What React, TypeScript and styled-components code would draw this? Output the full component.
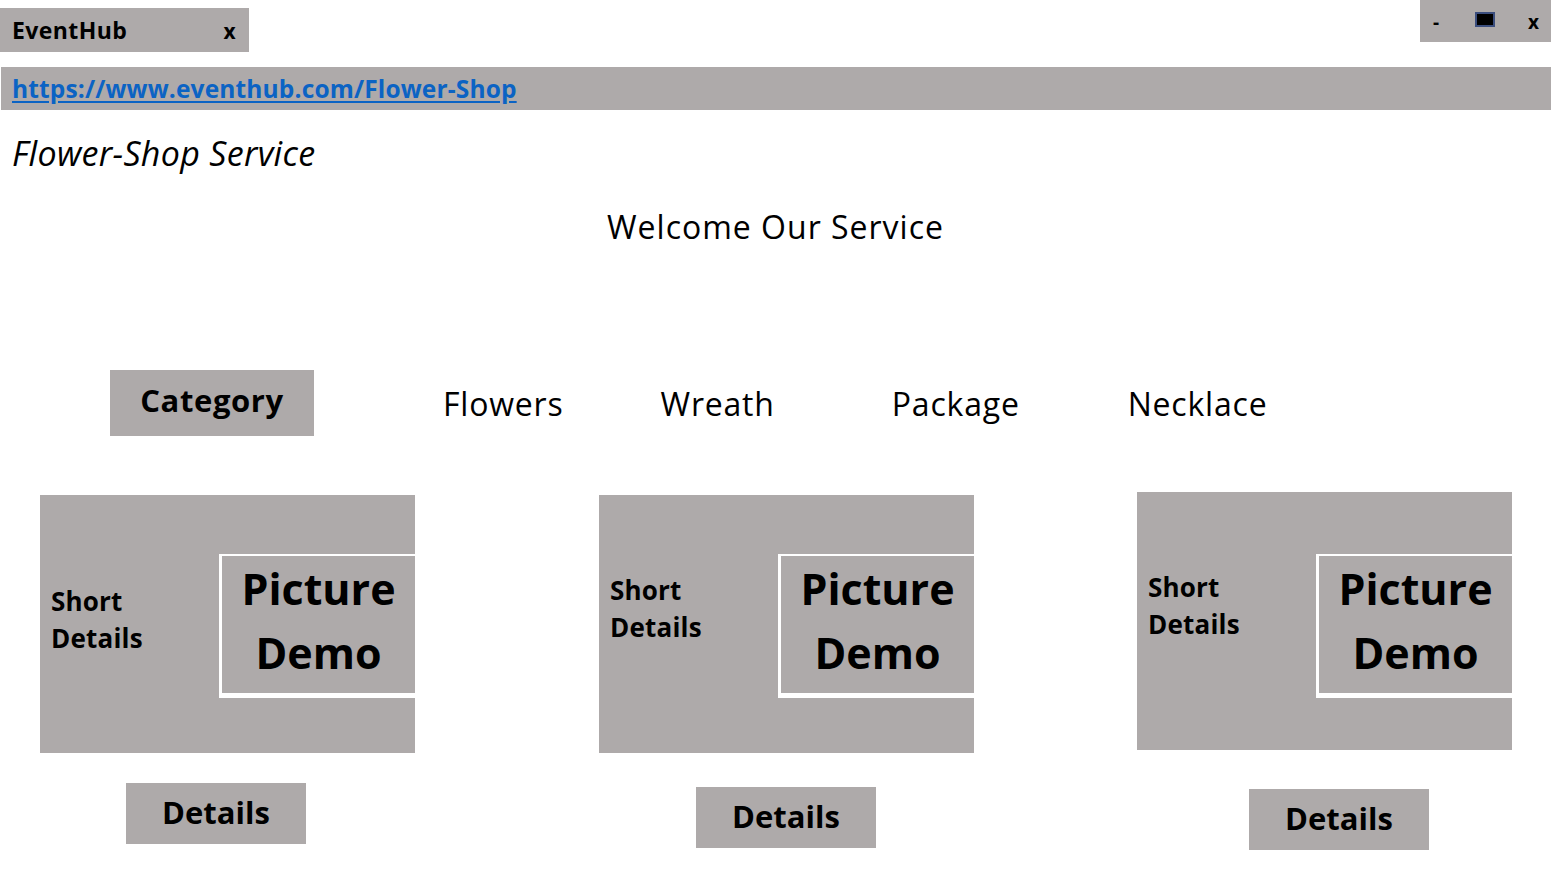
import styled, { createGlobalStyle } from "styled-components";

const GlobalStyle = createGlobalStyle`
  html, body {
    margin: 0;
    padding: 0;
    background: #ffffff;
    font-family: "Open Sans", Lato, sans-serif;
    color: #000;
  }
`;

const GRAY = "#aeaaaa";

interface CardData {
  left: number;
  shift: number;
  boxTop: number;
  btnLeft: number;
  btnTop: number;
  detailsTop: number;
}

const cards: CardData[] = [
  { left: 40, shift: 0, boxTop: 59, btnLeft: 86, btnTop: 30, detailsTop: -8 },
  { left: 184, shift: 0, boxTop: 59, btnLeft: 97, btnTop: 34, detailsTop: -30 },
  { left: 163, shift: -3, boxTop: 62, btnLeft: 112, btnTop: 39, detailsTop: -30 },
];

const navItems = [
  { label: "Flowers", gap: 0 },
  { label: "Wreath", gap: 97 },
  { label: "Package", gap: 117 },
  { label: "Necklace", gap: 108 },
];

const App = () => {
  return (
    <Page>
      <GlobalStyle />
      <TopBar>
        <Tab>
          <span>EventHub</span>
          <TabClose>x</TabClose>
        </Tab>
        <Controls>
          <span>-</span>
          <MaxBox />
          <span>x</span>
        </Controls>
      </TopBar>
      <UrlBar>
        <UrlLink href="#">https://www.eventhub.com/Flower-Shop</UrlLink>
      </UrlBar>
      <Title>Flower-Shop Service</Title>
      <Welcome>Welcome Our Service</Welcome>
      <CategoryRow>
        <CategoryButton>Category</CategoryButton>
        <NavList>
          {navItems.map((n) => (
            <NavItem key={n.label} $gap={n.gap}>
              {n.label}
            </NavItem>
          ))}
        </NavList>
      </CategoryRow>
      <CardsRow>
        {cards.map((c, i) => (
          <CardColumn key={i} $left={c.left} $shift={c.shift}>
            <Card>
              <ShortDetails $top={c.detailsTop}>
                Short
                <br />
                Details
              </ShortDetails>
              <PictureBox $top={c.boxTop}>
                Picture
                <br />
                Demo
              </PictureBox>
            </Card>
            <DetailsButton $left={c.btnLeft} $top={c.btnTop}>
              Details
            </DetailsButton>
          </CardColumn>
        ))}
      </CardsRow>
    </Page>
  );
};

export default App;

const Page = styled.div`
  width: 1551px;
  height: 872px;
  overflow: hidden;
`;

const TopBar = styled.div`
  display: flex;
  justify-content: space-between;
  align-items: flex-start;
  height: 67px;
`;

const Tab = styled.div`
  margin-top: 8px;
  width: 249px;
  height: 44px;
  box-sizing: border-box;
  background: ${GRAY};
  display: flex;
  align-items: center;
  justify-content: space-between;
  padding: 0 13px 0 12px;
  font-weight: 700;
  font-size: 23px;
  letter-spacing: 0.4px;
`;

const TabClose = styled.span`
  font-size: 21px;
  margin-top: 2px;
`;

const Controls = styled.div`
  width: 131px;
  height: 42px;
  background: ${GRAY};
  display: flex;
  align-items: center;
  justify-content: space-between;
  box-sizing: border-box;
  padding: 2px 12px 0 13px;
  font-weight: 700;
  font-size: 19px;
`;

const MaxBox = styled.div`
  width: 16px;
  height: 11px;
  background: #000;
  border: 2px solid #3b4e7e;
  margin-top: -5px;
  margin-left: 2px;
`;

const UrlBar = styled.div`
  height: 43px;
  margin-left: 1px;
  background: ${GRAY};
  display: flex;
  align-items: center;
  padding-left: 11px;
`;

const UrlLink = styled.a`
  color: #0b63c4;
  font-weight: 700;
  font-size: 24.5px;
  letter-spacing: 0.15px;
  text-decoration: underline;
  text-underline-offset: 3px;
`;

const Title = styled.div`
  margin-top: 23px;
  padding-left: 12px;
  font-style: italic;
  font-size: 34px;
  letter-spacing: 0.3px;
  line-height: 40px;
`;

const Welcome = styled.div`
  margin-top: 34px;
  text-align: center;
  font-size: 32px;
  letter-spacing: 1px;
  line-height: 40px;
`;

const CategoryRow = styled.div`
  margin-top: 123px;
  display: flex;
  align-items: center;
  padding-left: 110px;
`;

const CategoryButton = styled.div`
  width: 204px;
  height: 66px;
  background: ${GRAY};
  display: flex;
  align-items: center;
  justify-content: center;
  font-weight: 700;
  font-size: 31px;
  letter-spacing: 0.6px;
  padding-bottom: 6px;
  box-sizing: border-box;
`;

const NavList = styled.div`
  display: flex;
  margin-left: 129px;
  font-size: 32px;
  letter-spacing: 0.8px;
`;

const NavItem = styled.div<{ $gap: number }>`
  margin-left: ${(p) => p.$gap}px;
`;

const CardsRow = styled.div`
  margin-top: 59px;
  display: flex;
`;

const CardColumn = styled.div<{ $left: number; $shift: number }>`
  display: flex;
  flex-direction: column;
  margin-left: ${(p) => p.$left}px;
  margin-top: ${(p) => p.$shift}px;
`;

const Card = styled.div`
  width: 375px;
  height: 258px;
  background: ${GRAY};
  display: flex;
  align-items: center;
  justify-content: space-between;
`;

const ShortDetails = styled.div<{ $top: number }>`
  padding-left: 11px;
  font-weight: 700;
  font-size: 26px;
  letter-spacing: 0.2px;
  line-height: 37px;
  margin-top: ${(p) => p.$top}px;
`;

const PictureBox = styled.div<{ $top: number }>`
  align-self: flex-start;
  margin-top: ${(p) => p.$top}px;
  width: 196px;
  height: 144px;
  box-sizing: border-box;
  border-top: 2px solid #fff;
  border-left: 3px solid #fff;
  border-bottom: 5px solid #fff;
  display: flex;
  align-items: center;
  justify-content: center;
  text-align: center;
  font-weight: 700;
  font-size: 43px;
  line-height: 64px;
  padding-bottom: 7px;
`;

const DetailsButton = styled.div<{ $left: number; $top: number }>`
  margin-left: ${(p) => p.$left}px;
  margin-top: ${(p) => p.$top}px;
  width: 180px;
  height: 61px;
  background: ${GRAY};
  display: flex;
  align-items: center;
  justify-content: center;
  font-weight: 700;
  font-size: 31px;
  padding-bottom: 4px;
  box-sizing: border-box;
`;
